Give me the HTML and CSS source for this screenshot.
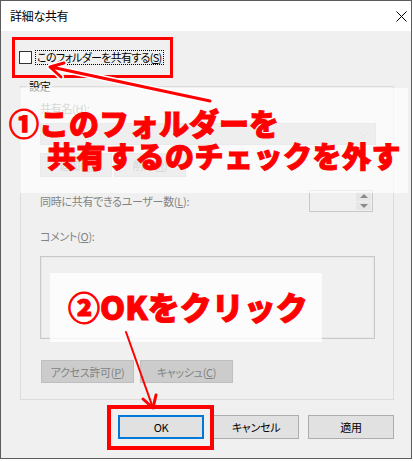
FILE: index.html
```html
<!DOCTYPE html>
<html lang="ja">
<head>
    <meta charset="UTF-8">
    <meta name="viewport" content="width=device-width, initial-scale=1.0">
    <title>詳細な共有</title>
    <link rel="stylesheet" href="styles.css">
</head>
<body>
    <div class="window">
        <div class="titlebar">
            <span class="title">詳細な共有</span>
            <svg class="close" width="11" height="11" viewBox="0 0 11 11">
                <path d="M0.5 0.5 L10.5 10.5 M10.5 0.5 L0.5 10.5" stroke="#000" stroke-width="1" fill="none"/>
            </svg>
        </div>

        <div class="client">
            <div class="share-row">
                <span class="checkbox"></span>
                <span class="share-label">このフォルダーを共有する(<u>S</u>)</span>
            </div>

            <fieldset class="settings">
                <legend>設定</legend>
                <div class="field-label first">共有名(<u>H</u>):</div>
                <div class="combo">
                    <svg width="9" height="5" viewBox="0 0 9 5">
                        <path d="M0.5 0.5 L4.5 4.5 L8.5 0.5" stroke="#b4b4b4" fill="none"/>
                    </svg>
                </div>
                <div class="name-buttons">
                    <span class="btn disabled">追加(<u>A</u>)</span>
                    <span class="btn disabled">削除(<u>R</u>)</span>
                </div>
                <div class="limit-row">
                    <span class="field-label">同時に共有できるユーザー数(<u>L</u>):</span>
                    <div class="spinner">
                        <div class="spin-buttons">
                            <span class="spin up"></span>
                            <span class="spin down"></span>
                        </div>
                    </div>
                </div>
                <div class="field-label comment-label">コメント(<u>O</u>):</div>
                <div class="comment"></div>
                <div class="settings-buttons">
                    <span class="btn disabled">アクセス許可(<u>P</u>)</span>
                    <span class="btn disabled">キャッシュ(<u>C</u>)</span>
                </div>
            </fieldset>

            <div class="footer">
                <span class="btn default">OK</span>
                <span class="btn">キャンセル</span>
                <span class="btn">適用</span>
            </div>
        </div>
    </div>

    <!-- annotations drawn over the screenshot -->
    <div class="veil veil-one"></div>
    <div class="veil veil-two"></div>
    <div class="mark mark-check"></div>
    <div class="mark mark-ok"></div>

    <div class="note note-one">
        <span class="line">①このフォルダーを</span>
        <span class="line indent">共有するのチェックを外す</span>
    </div>
    <div class="note note-two">②OKをクリック</div>

    <svg class="arrows" width="413" height="461" viewBox="0 0 413 461">
        <g fill="none" stroke-linecap="round" stroke-linejoin="round">
            <path d="M210 101 L51 67 M64 63 L50 67 L61 77" stroke="#fff" stroke-width="6"/>
            <path d="M210 101 L51 67 M64 63 L50 67 L61 77" stroke="#f00" stroke-width="3"/>
            <path d="M126 332 L153 408" stroke="#f00" stroke-width="2"/>
            <path d="M143 399 L153 408 L156 395" stroke="#f00" stroke-width="3"/>
        </g>
    </svg>
</body>
</html>
```

FILE: styles.css
```css
* {
    box-sizing: border-box;
}

body {
    margin: 0;
    position: relative;
    width: 413px;
    height: 461px;
    overflow: hidden;
    background: #fff;
    font-family: "Noto Sans CJK JP", "Noto Sans", sans-serif;
    font-size: 11px;
    letter-spacing: -0.3px;
    font-feature-settings: "palt";
    color: #000;
}

u {
    text-decoration-thickness: 1px;
    text-underline-offset: 1px;
}

/* Dialog window */
.window {
    width: 412px;
    height: 459px;
    border: 1px solid #5c5c5c;
    background: #f0f0f0;
}

.titlebar {
    height: 30px;
    background: #fff;
    display: flex;
    align-items: center;
    justify-content: space-between;
    padding: 0 4px 0 9px;
}

.title {
    font-size: 12px;
    line-height: 16px;
}

.share-row {
    display: flex;
    align-items: center;
    height: 13px;
    margin: 20px 0 0 18px;
}

.checkbox {
    width: 13px;
    height: 13px;
    border: 1px solid #333;
    background: #fff;
}

.share-label {
    margin-left: 4px;
    padding: 0 1px;
    line-height: 13px;
    letter-spacing: -0.7px;
    outline: 1px dotted #000;
}

/* Settings group box */
.settings {
    margin: 15px 0 0 19px;
    width: 374px;
    border: 1px solid #dcdcdc;
    padding: 0 16px 16px 19px;
}

.settings legend {
    margin-left: -13px;
    padding: 0 2px;
    line-height: 14px;
}

.field-label {
    color: #838383;
    line-height: 16px;
}

.field-label.first {
    margin-top: 7px;
}

.combo {
    margin-top: 7px;
    width: 336px;
    height: 22px;
    border: 1px solid #bfbfbf;
    background: #cccccc;
    display: flex;
    align-items: center;
    justify-content: flex-end;
    padding-right: 6px;
}

.btn {
    display: flex;
    align-items: center;
    justify-content: center;
    height: 23px;
    border: 1px solid #adadad;
    background: #e1e1e1;
    line-height: 16px;
}

.btn.disabled {
    border-color: #bfbfbf;
    background: #cccccc;
    color: #838383;
}

.name-buttons {
    display: flex;
    gap: 2px;
    margin-top: 8px;
}

.name-buttons .btn {
    width: 72px;
    height: 24px;
}

.limit-row {
    display: flex;
    align-items: center;
    justify-content: space-between;
    width: 333px;
    height: 22px;
    margin-top: 13px;
}

.spinner {
    width: 64px;
    height: 22px;
    border: 1px solid #c8c8c8;
    display: flex;
    justify-content: flex-end;
    padding: 1px;
}

.spin-buttons {
    width: 15px;
    display: flex;
    flex-direction: column;
    gap: 1px;
}

.spin {
    flex: 1;
    background: #e6e6e6;
    display: flex;
    align-items: center;
    justify-content: center;
}

.spin::after {
    content: "";
    border-left: 4px solid transparent;
    border-right: 4px solid transparent;
}

.spin.up::after {
    border-bottom: 4px solid #8a8a8a;
}

.spin.down::after {
    border-top: 4px solid #8a8a8a;
}

.comment-label {
    margin-top: 16px;
}

.comment {
    margin-top: 12px;
    width: 335px;
    height: 83px;
    border: 1px solid #c8c8c8;
    box-shadow: inset 0 0 0 1px #e8e8e8;
}

.settings-buttons {
    display: flex;
    gap: 6px;
    margin: 21px 0 0 1px;
}

.settings-buttons .btn {
    width: 93px;
}

/* Bottom buttons */
.footer {
    display: flex;
    justify-content: flex-end;
    gap: 9px;
    margin-top: 15px;
    padding-right: 17px;
}

.footer .btn {
    width: 86px;
    height: 24px;
}

.footer .btn.default {
    border: 2px solid #0078d7;
}

/* Annotations */
.veil {
    position: absolute;
    background: rgba(255, 255, 255, 0.67);
}

.veil-one {
    left: 20px;
    top: 88px;
    width: 388px;
    height: 105px;
}

.veil-two {
    left: 50px;
    top: 273px;
    width: 272px;
    height: 69px;
    background: rgba(255, 255, 255, 0.8);
}

.mark {
    position: absolute;
    border: 3px solid #f00;
}

.mark-check {
    left: 12px;
    top: 37px;
    width: 161px;
    height: 41px;
}

.mark-ok {
    left: 107px;
    top: 405px;
    width: 107px;
    height: 45px;
    border-width: 4px;
}

.note {
    position: absolute;
    color: #f00;
    font-weight: 900;
    letter-spacing: 0;
    font-feature-settings: normal;
    -webkit-text-stroke: 1px #f00;
    white-space: nowrap;
}

.note-one {
    left: 9px;
    top: 106px;
    font-size: 30px;
    line-height: 33px;
}

.note-one .line {
    display: block;
}

.note-one .indent {
    padding-left: 38px;
    font-size: 29px;
    letter-spacing: 0.5px;
}

.note-two {
    left: 68px;
    top: 288px;
    font-size: 32px;
    line-height: 36px;
}

.arrows {
    position: absolute;
    left: 0;
    top: 0;
}
```
